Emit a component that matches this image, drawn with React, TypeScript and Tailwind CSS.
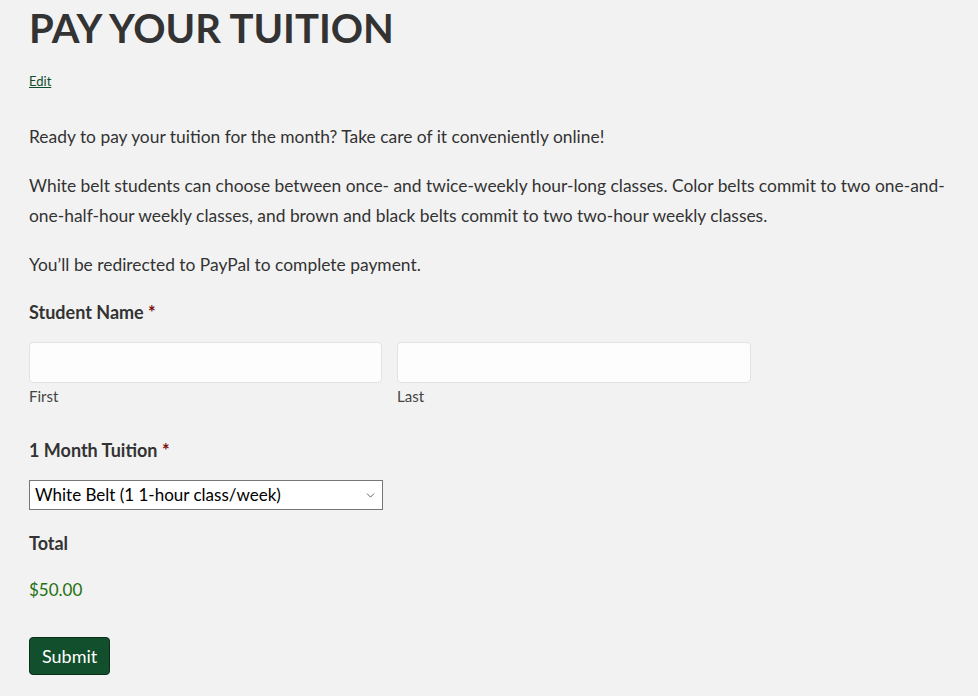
import { ChevronDown } from "lucide-react";

const body = "font-['Lato','Open_Sans',sans-serif]";

export default function App() {
  return (
    <div className={`min-h-[696px] bg-[#f2f2f2] text-[#333333] ${body}`}>
      <main className="px-[29px] pr-[28px]">
        <h1 className="pt-[6px] text-[40px] font-bold leading-[44px] text-[#333333]">PAY YOUR TUITION</h1>
        <a href="#" className="mt-[23px] inline-block text-[13px] leading-[16px] text-[#0f4d2a] underline">Edit</a>

        <div className="mt-[30px] space-y-[19px] text-[17.4px] leading-[30px]">
          <p>Ready to pay your tuition for the month? Take care of it conveniently online!</p>
          <p>
            White belt students can choose between once- and twice-weekly hour-long classes. Color belts commit to two one-and-one-half-hour weekly classes, and brown and black belts commit to two two-hour weekly classes.
          </p>
          <p>You’ll be redirected to PayPal to complete payment.</p>
        </div>

        <form className="mt-[19px]" onSubmit={(e) => e.preventDefault()}>
          <div className="text-[18px] font-bold leading-[26px]">
            Student Name <span className="text-[#7a0c0c]">*</span>
          </div>
          <div className="mt-[17px] flex gap-[15px]">
            <label className="flex w-[353px] flex-col">
              <input className="h-[41px] rounded-[4px] border border-[#e2e2e2] bg-[#fdfdfd] px-2 outline-none" />
              <span className="mt-[3px] text-[15px] leading-[20px] text-[#444444]">First</span>
            </label>
            <label className="flex w-[354px] flex-col">
              <input className="h-[41px] rounded-[4px] border border-[#e2e2e2] bg-[#fdfdfd] px-2 outline-none" />
              <span className="mt-[3px] text-[15px] leading-[20px] text-[#444444]">Last</span>
            </label>
          </div>

          <div className="mt-[31px] text-[18px] font-bold leading-[26px]">
            1 Month Tuition <span className="text-[#7a0c0c]">*</span>
          </div>
          <div className="relative mt-[17px] h-[30px] w-[354px] border border-[#767676] bg-white">
            <div className="flex h-full items-center pl-[5px] text-[17px] text-black">White Belt (1 1-hour class/week)</div>
            <ChevronDown className="absolute right-[5px] top-[8px] text-[#444444]" size={13} strokeWidth={1.5} />
          </div>

          <div className="mt-[20px] text-[18px] font-bold leading-[26px]">Total</div>
          <div className="mt-[21px] text-[17px] leading-[26px] text-[#22700f]">$50.00</div>

          <button type="submit" className="mt-[34px] h-[38px] rounded-[4px] border border-[#0a2e17] bg-[#12502d] px-[12px] text-[18px] text-white">
            Submit
          </button>
        </form>
      </main>
    </div>
  );
}
